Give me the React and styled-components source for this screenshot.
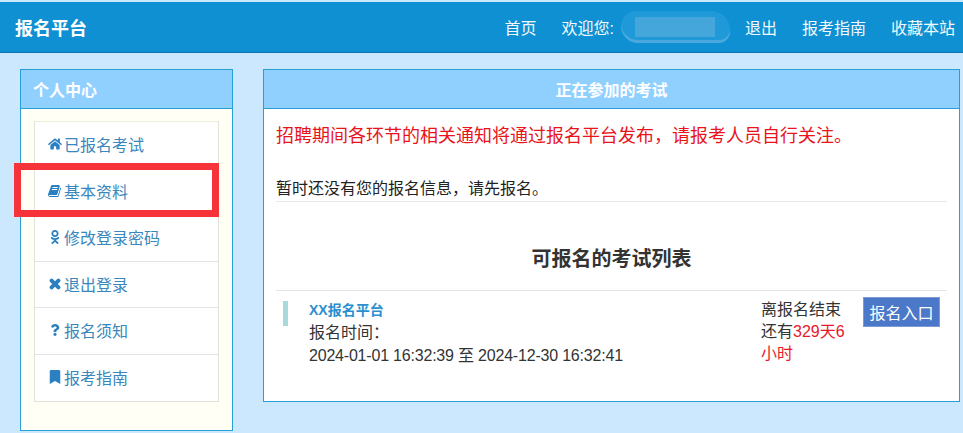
import React from 'react';
import styled, { createGlobalStyle } from 'styled-components';
import { FaHome, FaOdnoklassniki, FaTimes, FaQuestion, FaBookmark } from 'react-icons/fa';

const Global = createGlobalStyle`
  html, body { margin: 0; padding: 0; background: #cbe8ff; }
  body { font-family: "Liberation Sans", "Noto Sans CJK SC", sans-serif; font-size: 16px; color: #333; overflow: hidden; }
  * { box-sizing: border-box; }
`;

const Page = styled.div`
  width: 963px; height: 433px; position: relative; overflow: hidden;
  background: #cbe8ff; padding-top: 2px;
`;
const TopBar = styled.header`
  height: 51px; background: #0e90d2; border-bottom: 1px solid #0b77ae;
  display: flex; align-items: center; justify-content: space-between;
  padding: 0 8px 0 15px; color: #fff;
`;
const Brand = styled.div`font-size: 18px; font-weight: 700; color: #fff;`;
const Nav = styled.nav`display: flex; align-items: center; gap: 25px; font-size: 16px; color: #f2f8fc;`;
const Welcome = styled.span`display: flex; align-items: center;`;
const Redaction = styled.span`
  display: flex; align-items: center; justify-content: center;
  width: 109px; height: 32px; margin-left: 7px; margin-right: -10px;
  border-radius: 16px 20px 12px 18px; background: #2099d8;
  box-shadow: inset 0 -3px 0 #4aa8de;
`;
const RedactionCore = styled.span`display: block; width: 80px; height: 20px; background: #45a6dc;`;
const Content = styled.main`display: flex; align-items: flex-start; gap: 30px; padding: 16px 4px 0 20px;`;
const Sidebar = styled.aside`
  width: 213px; height: 362px; background: #fffff6; border: 1px solid #2a9fd6;
  flex: none;
`;
const PanelHead = styled.div`
  height: 39px; background: #90d0ff; border-bottom: 1px solid #2a9fd6;
  display: flex; align-items: center; font-size: 16px; font-weight: 700; color: #fff;
  justify-content: ${p => (p.$center ? 'center' : 'flex-start')};
  padding-left: ${p => (p.$center ? '0' : '12px')};
`;
const Menu = styled.ul`
  list-style: none; margin: 12px 13px 0; padding: 0;
  border: 1px solid #e2e2d8; background: #fff; border-top-color: #eeeedd;
`;
const MenuItem = styled.li`
  height: 46.5px; display: flex; align-items: center; gap: 2px; padding: 0 0 1px 13px;
  color: #3a87bd; font-size: 16px;
  border-bottom: ${p => (p.$last ? '0' : '1px solid #e4e4e4')};
  svg { flex: none; width: 14px; height: 14px; color: #2a80c0; }
`;
const Main = styled.section`
  flex: 1; height: 333px; background: #fff; border: 1px solid #2a9fd6; display: flex; flex-direction: column;
`;
const Notice = styled.p`margin: 0; padding: 14px 12px 0; font-size: 18px; line-height: 26px; color: #e8131b;`;
const Status = styled.p`
  margin: 28px 12px 0; height: 25px; font-size: 16px; line-height: 24px; color: #222;
  border-bottom: 1px solid #e8e8e8;
`;
const ListTitle = styled.h2`
  margin: 0 12px; padding-top: 43px; height: 89px; text-align: center; font-size: 20px; line-height: 28px; font-weight: 700; color: #333;
  border-bottom: 1px solid #e4e4e4;
`;
const ExamRow = styled.div`display: flex; align-items: flex-start; padding: 4px 19px 0 19px;`;
const Accent = styled.div`width: 5px; height: 25px; margin-top: 6px; background: #a8dadc; flex: none;`;
const ExamInfo = styled.div`width: 473px; padding: 4px 0 0 21px; flex: none;`;
const ExamName = styled.div`font-size: 14px; line-height: 22px; font-weight: 700; color: #2a8fce;`;
const ExamLine = styled.div`font-size: 16px; line-height: 23px; color: #333;`;
const DateText = styled.span`letter-spacing: -0.2px;`;
const Remain = styled.div`width: 90px; margin-right: 12px; font-size: 16px; line-height: 22px; color: #333; flex: none; padding-top: 4px;`;
const Red = styled.span`color: #e8192c;`;
const EnterButton = styled.button`
  width: 77px; height: 30px; padding: 0; border: 1px solid #7b9bd6; background: #4b78c9; color: #fff;
  font: inherit; font-size: 16px; flex: none; margin-top: 2px;
`;
const Annotation = styled.div`
  position: absolute; left: 14px; top: 163px; width: 205px; height: 54px;
  border: 7px solid #f53338; pointer-events: none;
`;
const TimesIcon = styled(FaTimes)`stroke: currentColor; stroke-width: 50px;`;
const QuestionIcon = styled(FaQuestion)`transform: scale(0.85);`;

const BookIcon = () => (
  <svg viewBox="0 0 1792 1792" fill="currentColor" aria-hidden="true">
    <path d="M1639 478q40 57 18 129l-275 906q-19 64-76.5 107.5t-122.5 43.5h-923q-77 0-148.5-53.5t-99.5-131.5q-24-67-2-127 0-4 3-27t4-37q1-8-3-21.5t-3-19.5q2-11 8-21t16.5-23.5 16.5-23.5q23-38 45-91.5t30-91.5q3-10 .5-30t-.5-28q3-11 17-28t17-23q21-36 42-92t25-90q1-9-2.5-32t.5-28q4-13 22-30.5t22-22.5q19-26 42.5-84.5t27.5-96.5q1-8-3-25.5t-2-26.5q2-8 9-18t18-23 17-21q8-12 16.5-30.5t15-35 16-36 19.5-32 26.5-23.5 36-11.5 47.5 5.5l-1 3q38-9 51-9h761q74 0 114 56t18 130l-274 906q-36 119-71.5 153.5t-128.5 34.5h-869q-27 0-38 15-11 16-1 43 24 70 144 70h923q29 0 56-15.5t35-41.5l300-987q7-22 5-57 38 15 59 43zm-1064 2q-4 13 2 22.5t20 9.5h608q13 0 25.5-9.5t16.5-22.5l21-64q4-13-2-22.5t-20-9.5h-608q-13 0-25.5 9.5t-16.5 22.5zm-83 256q-4 13 2 22.5t20 9.5h608q13 0 25.5-9.5t16.5-22.5l21-64q4-13-2-22.5t-20-9.5h-608q-13 0-25.5 9.5t-16.5 22.5z" />
  </svg>
);

const menu = [
  [FaHome, '已报名考试'], [BookIcon, '基本资料'], [FaOdnoklassniki, '修改登录密码'],
  [TimesIcon, '退出登录'], [QuestionIcon, '报名须知'], [FaBookmark, '报考指南'],
];

export default function App() {
  return (
    <Page>
      <Global />
      <TopBar>
        <Brand>报名平台</Brand>
        <Nav>
          <span>首页</span>
          <Welcome>欢迎您:<Redaction><RedactionCore /></Redaction></Welcome>
          <span>退出</span>
          <span>报考指南</span>
          <span>收藏本站</span>
        </Nav>
      </TopBar>
      <Content>
        <Sidebar>
          <PanelHead>个人中心</PanelHead>
          <Menu>
            {menu.map(([Icon, label], i) => (
              <MenuItem key={label} $last={i === menu.length - 1}><Icon />{label}</MenuItem>
            ))}
          </Menu>
        </Sidebar>
        <Main>
          <PanelHead $center>正在参加的考试</PanelHead>
          <Notice>招聘期间各环节的相关通知将通过报名平台发布，请报考人员自行关注。</Notice>
          <Status>暂时还没有您的报名信息，请先报名。</Status>
          <ListTitle>可报名的考试列表</ListTitle>
          <ExamRow>
            <Accent />
            <ExamInfo>
              <ExamName>XX报名平台</ExamName>
              <ExamLine>报名时间：</ExamLine>
              <ExamLine><DateText>2024-01-01 16:32:39 至 2024-12-30 16:32:41</DateText></ExamLine>
            </ExamInfo>
            <Remain>离报名结束<br />还有<Red>329天6</Red><br /><Red>小时</Red></Remain>
            <EnterButton>报名入口</EnterButton>
          </ExamRow>
        </Main>
      </Content>
      <Annotation />
    </Page>
  );
}
